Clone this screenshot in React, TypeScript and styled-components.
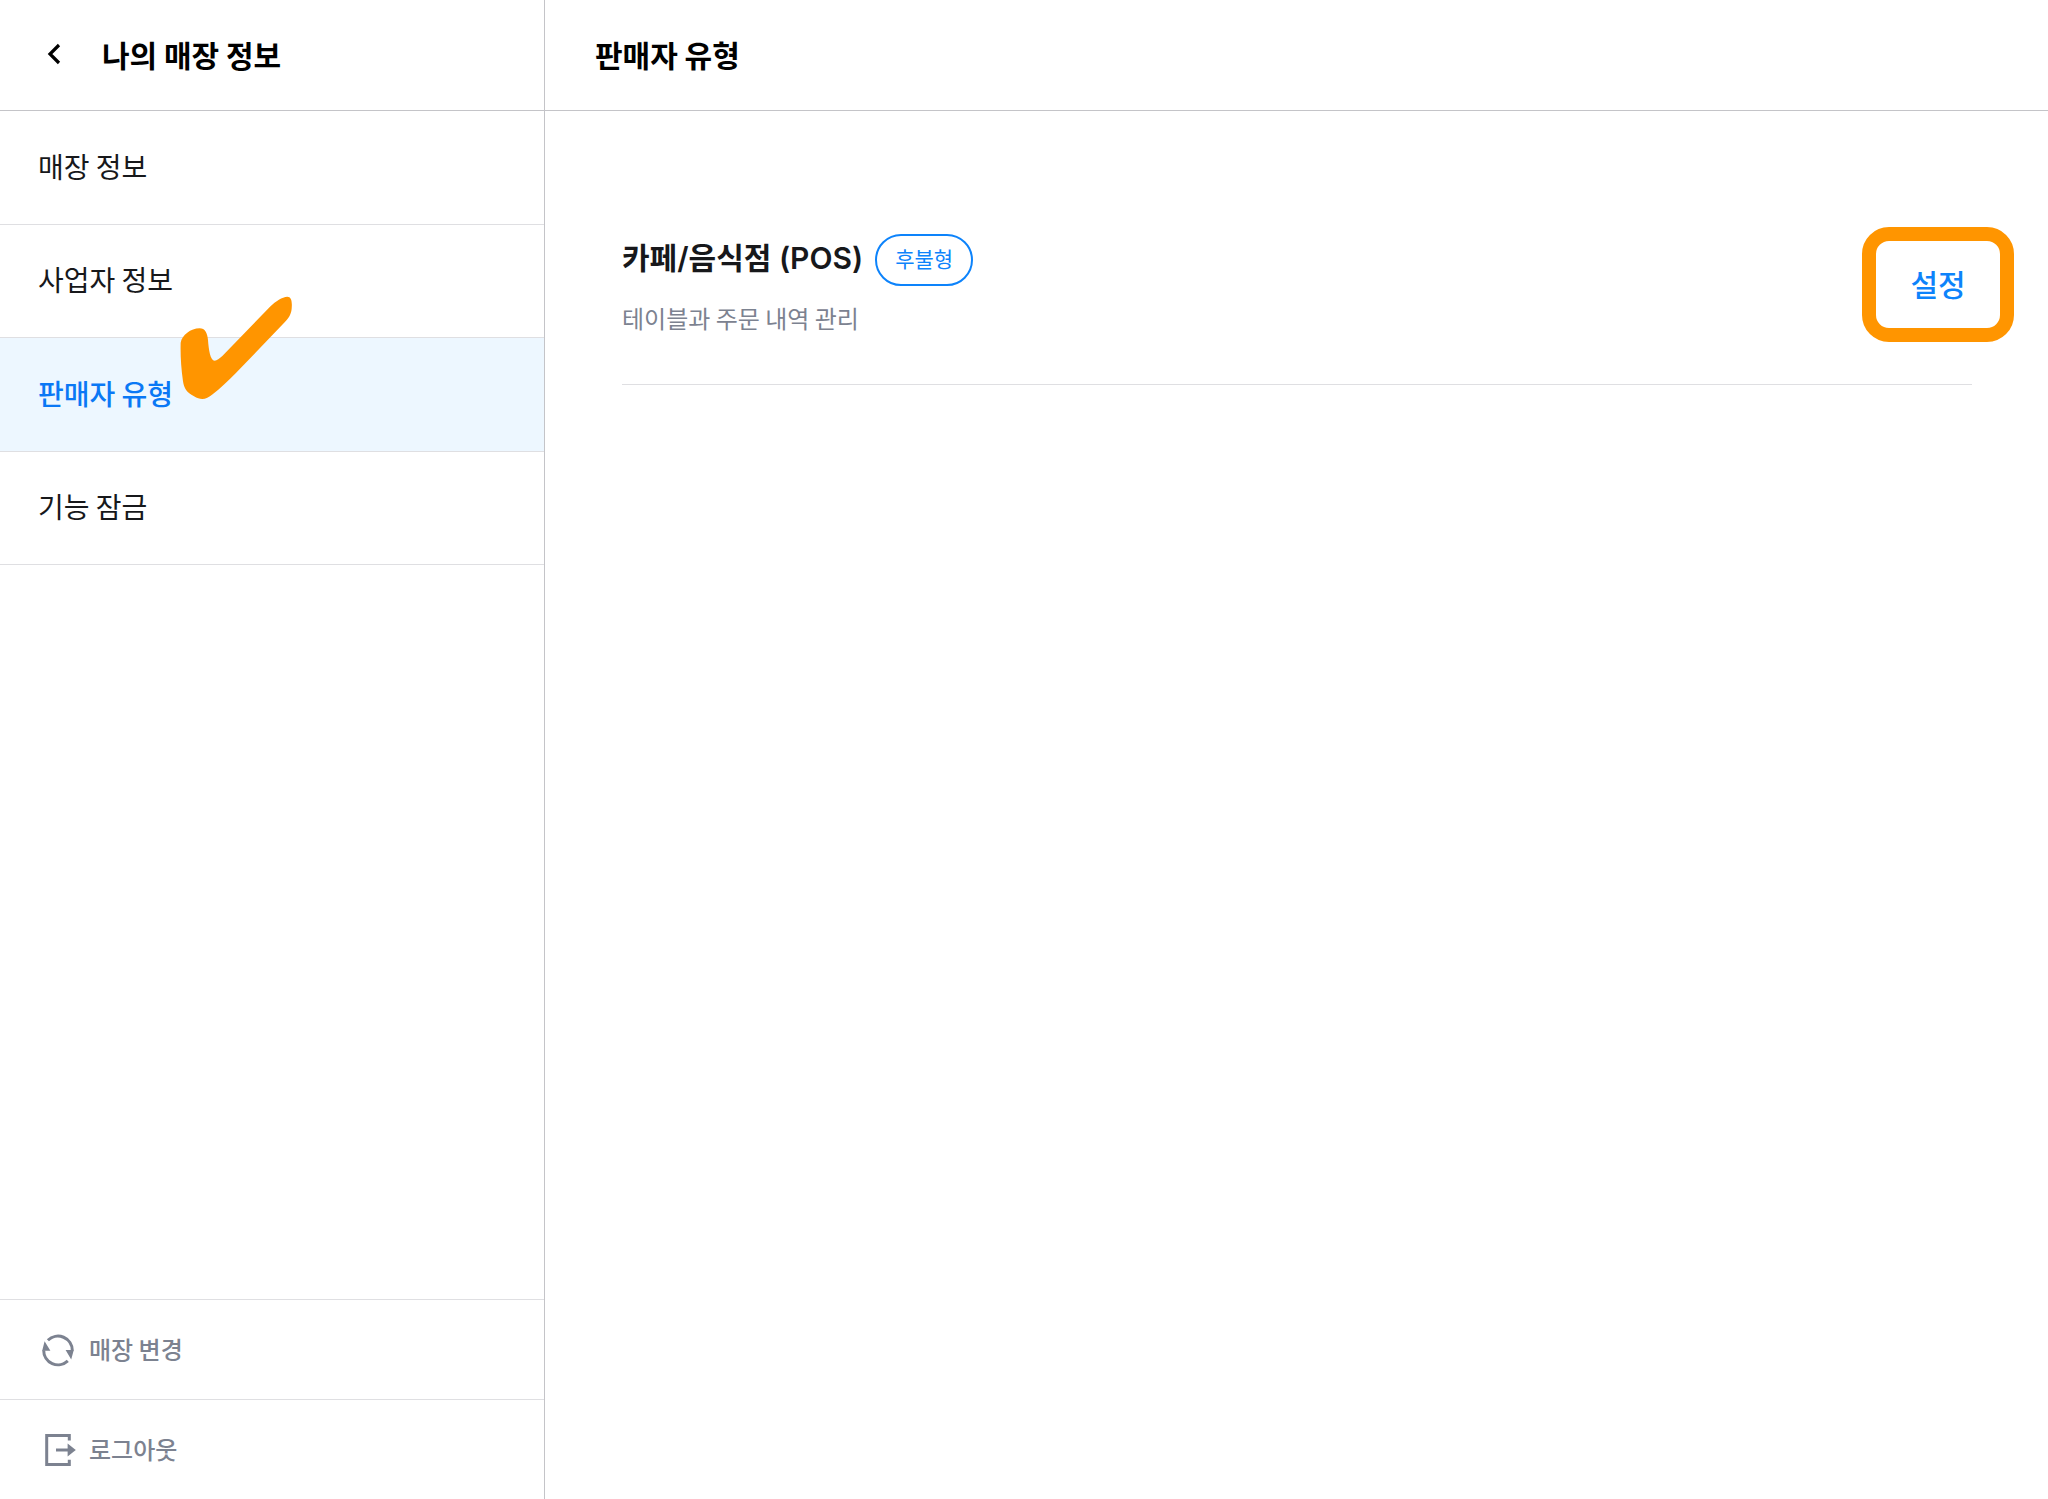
import React from "react";
import styled, { createGlobalStyle } from "styled-components";

const colors = {
  ink: "#000000",
  text: "#17181b",
  muted: "#7c8290",
  blue: "#0d83fb",
  activeBlue: "#0a78f5",
  activeBg: "#edf7ff",
  line: "#c4c4c8",
  softLine: "#dfdfe2",
  orange: "#ff9500",
};

const GlobalStyle = createGlobalStyle`
  *, *::before, *::after { box-sizing: border-box; }
  body {
    margin: 0;
    background: #fff;
    color: ${colors.text};
    font-family: "Noto Sans CJK KR", sans-serif;
  }
  h1, h2, h3, p, ul { margin: 0; padding: 0; }
  ul { list-style: none; }
  button { font: inherit; color: inherit; background: none; border: 0; padding: 0; cursor: pointer; }
`;

const Page = styled.div`
  display: grid;
  grid-template-columns: 545px 1fr;
  min-height: 100vh;
`;

const Sidebar = styled.aside`
  display: flex;
  flex-direction: column;
  border-right: 1px solid ${colors.line};
`;

const Bar = styled.header<{ $inset: number }>`
  display: flex;
  align-items: center;
  height: 111px;
  padding-bottom: 2px;
  padding-left: ${(p) => p.$inset}px;
  border-bottom: 1px solid ${colors.line};
`;

const BarTitle = styled.h1`
  font-size: 30px;
  line-height: 44px;
  font-weight: 700;
  color: ${colors.ink};
`;

const BackButton = styled.button`
  display: flex;
  align-items: center;
  justify-content: center;
  width: 32px;
  height: 44px;
  margin-right: 32px;
`;

const Menu = styled.ul`
  display: grid;
  grid-template-rows: repeat(4, 1fr);
  height: 454px;
`;

const MenuItem = styled.li<{ $active?: boolean }>`
  position: relative;
  border-bottom: 1px solid ${colors.softLine};
  background: ${(p) => (p.$active ? colors.activeBg : "transparent")};
  color: ${(p) => (p.$active ? colors.activeBlue : colors.text)};
  font-weight: ${(p) => (p.$active ? 500 : 400)};
`;

const MenuLink = styled.a`
  display: flex;
  align-items: center;
  height: 100%;
  padding-bottom: 3px;
  padding-left: 38px;
  font-size: 28px;
  line-height: 40px;
  color: inherit;
  text-decoration: none;
`;

const CheckMark = styled.svg`
  position: absolute;
  left: 180px;
  top: -42px;
  width: 113px;
  height: 104px;
  pointer-events: none;
`;

const Footer = styled.footer`
  margin-top: auto;
`;

const FooterButton = styled.button`
  display: flex;
  align-items: center;
  gap: 13px;
  width: 100%;
  height: 100px;
  padding-left: 40px;
  border-top: 1px solid ${colors.softLine};
  font-size: 24px;
  line-height: 36px;
  font-weight: 500;
  color: ${colors.muted};
`;

const FooterLabel = styled.span`
  padding-bottom: 2px;
`;

const Main = styled.main`
  display: flex;
  flex-direction: column;
`;

const Content = styled.section`
  padding: 112px 76px 0 77px;
`;

const TypeRow = styled.article`
  display: flex;
  justify-content: space-between;
  align-items: flex-start;
  padding: 11px 0 48px;
  border-bottom: 1px solid ${colors.softLine};
`;

const TypeHead = styled.div`
  display: flex;
  align-items: center;
  gap: 12px;
`;

const TypeName = styled.h2`
  padding-bottom: 4px;
  font-family: Inter, "Noto Sans CJK KR", sans-serif;
  font-size: 30px;
  line-height: 44px;
  font-weight: 600;
`;

const Badge = styled.span`
  display: flex;
  align-items: center;
  height: 52px;
  padding: 0 18px 4px;
  border: 2px solid ${colors.blue};
  border-radius: 26px;
  font-size: 21px;
  line-height: 28px;
  color: ${colors.blue};
`;

const TypeNote = styled.p`
  margin-top: 14px;
  font-size: 24px;
  line-height: 36px;
  color: ${colors.muted};
`;

const SetupButton = styled.button`
  position: relative;
  width: 68px;
  height: 100px;
  padding-bottom: 2px;
  font-size: 30px;
  line-height: 44px;
  font-weight: 500;
  color: ${colors.blue};

  &::after {
    content: "";
    position: absolute;
    inset: -7px -42px -8px;
    border: 14px solid ${colors.orange};
    border-radius: 27px;
    pointer-events: none;
  }
`;

const menu = ["매장 정보", "사업자 정보", "판매자 유형", "기능 잠금"];
const current = "판매자 유형";

const BackIcon = () => (
  <svg width="16" height="24" viewBox="0 0 16 24" fill="none" aria-hidden="true">
    <path d="M13 3 4 12 13 21" stroke={colors.ink} strokeWidth="3.2" />
  </svg>
);

const SwitchIcon = () => (
  <svg width="36" height="36" viewBox="0 0 36 36" fill="none" aria-hidden="true">
    <path d="M7.9 8.3A14.3 14.3 0 0 1 32.3 18.6" stroke="currentColor" strokeWidth="3" />
    <path d="M27.8 28.9A14.3 14.3 0 0 1 3.7 18.2" stroke="currentColor" strokeWidth="3" />
    <path d="M4.6 9.3 10.4 18.8H2.2zM31.2 27.6 25.6 18h8.2z" fill="currentColor" />
  </svg>
);

const LogoutIcon = () => (
  <svg width="36" height="36" viewBox="0 0 36 36" fill="none" aria-hidden="true">
    <path d="M29.3 8.5V3.4H6.7V32.6H29.3V27.8" stroke="currentColor" strokeWidth="3" />
    <path d="M16 18H29" stroke="currentColor" strokeWidth="3" />
    <path d="M27.6 11.6 35.8 18 27.6 24.4z" fill="currentColor" />
  </svg>
);

export default function App() {
  return (
    <>
      <GlobalStyle />
      <Page>
        <Sidebar>
          <Bar $inset={38}>
            <BackButton type="button" aria-label="뒤로">
              <BackIcon />
            </BackButton>
            <BarTitle>나의 매장 정보</BarTitle>
          </Bar>
          <nav>
            <Menu>
              {menu.map((label) => (
                <MenuItem key={label} $active={label === current}>
                  <MenuLink href="#" aria-current={label === current ? "page" : undefined}>
                    {label}
                  </MenuLink>
                  {label === current && (
                    <CheckMark viewBox="30 46 339 312" aria-hidden="true">
                      <path
                        fill={colors.orange}
                        d="M32 186C36 164 62 143 89 143C105 143 112 157 114 178C116 207 121 240 134 240C141 240 148 234 157 226L300 78C318 61 336 49 352 48C364 48 367 62 365 84C363 102 356 112 344 125L197 278C174 302 150 324 128 341C108 358 92 359 72 347C50 336 42 322 39 302C33 262 31 222 32 186Z"
                      />
                    </CheckMark>
                  )}
                </MenuItem>
              ))}
            </Menu>
          </nav>
          <Footer>
            <FooterButton type="button">
              <SwitchIcon />
              <FooterLabel>매장 변경</FooterLabel>
            </FooterButton>
            <FooterButton type="button">
              <LogoutIcon />
              <FooterLabel>로그아웃</FooterLabel>
            </FooterButton>
          </Footer>
        </Sidebar>
        <Main>
          <Bar $inset={50}>
            <BarTitle as="h2">판매자 유형</BarTitle>
          </Bar>
          <Content>
            <TypeRow>
              <div>
                <TypeHead>
                  <TypeName>카페/음식점 (POS)</TypeName>
                  <Badge>후불형</Badge>
                </TypeHead>
                <TypeNote>테이블과 주문 내역 관리</TypeNote>
              </div>
              <SetupButton type="button">설정</SetupButton>
            </TypeRow>
          </Content>
        </Main>
      </Page>
    </>
  );
}
